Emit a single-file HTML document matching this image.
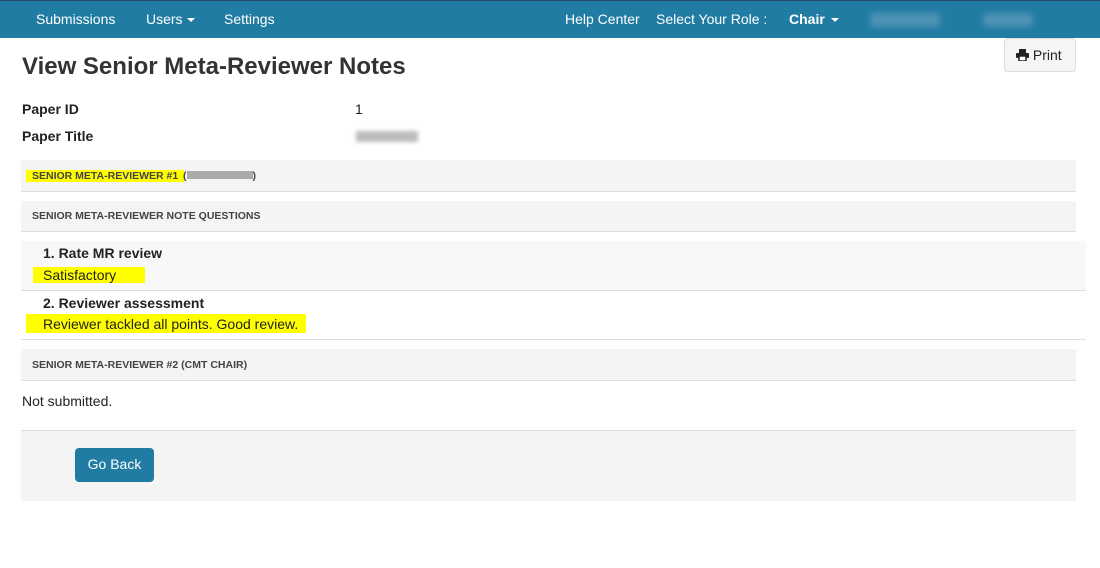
<!DOCTYPE html>
<html><head><style>
body{margin:0;width:1100px;height:568px;background:#fff;font-family:"Liberation Sans",sans-serif;color:#222;position:relative;overflow:hidden}
.a{position:absolute}
.nav{left:0;top:0;width:1100px;height:38px;background:#217ca3;border-top:1px solid #2a4a6a;box-sizing:border-box;color:#fff;font-size:14px}
.nav span{position:absolute;top:10px}
.car{display:inline-block;border-left:4px solid transparent;border-right:4px solid transparent;border-top:4px solid #fff;vertical-align:middle;margin-left:4px}
.blur{background:#4d92b4;border-radius:4px;filter:blur(3px)}
.bar{background:#f4f4f4;border-bottom:1px solid #ddd;font-size:10.5px;font-weight:bold;color:#444}
.hl{background:#ffff00}
</style></head><body>
<div class="a nav">
<span style="left:36px">Submissions</span>
<span style="left:146px">Users<i class="car"></i></span>
<span style="left:224px">Settings</span>
<span style="left:565px">Help Center</span>
<span style="left:656px">Select Your Role :</span>
<span style="left:789px;font-weight:bold">Chair<i class="car" style="margin-left:6px"></i></span>
<div class="a blur" style="left:870px;top:12px;width:70px;height:14px"></div>
<div class="a blur" style="left:983px;top:12px;width:50px;height:14px"></div>
</div>
<div class="a" style="left:1004px;top:38px;width:72px;height:34px;border:1px solid #ddd;border-radius:4px;background:#f5f5f5;font-size:14px;box-sizing:border-box;padding:8px 0 0 11px"><svg width="13" height="12" viewBox="0 0 13 12" style="vertical-align:-1px"><rect x="3" y="0" width="7" height="4" fill="#222"/><rect x="0" y="4" width="13" height="5" rx="1" fill="#222"/><rect x="3" y="7" width="7" height="5" fill="#fff" stroke="#222" stroke-width="1.5"/></svg> Print</div>
<div class="a" style="left:22px;top:53px;font-size:24px;font-weight:bold;color:#333">View Senior Meta-Reviewer Notes</div>
<div class="a" style="left:22px;top:101px;font-size:14px;font-weight:bold">Paper ID</div>
<div class="a" style="left:355px;top:101px;font-size:14px">1</div>
<div class="a" style="left:22px;top:128px;font-size:14px;font-weight:bold">Paper Title</div>
<div class="a" style="left:356px;top:131px;width:62px;height:11px;background:#bbb;filter:blur(2px)"></div>
<div class="a bar" style="left:21px;top:160px;width:1055px;height:31px"><span class="a hl" style="left:5px;top:10px;padding:0 0 0 6px;width:152px">SENIOR META-REVIEWER #1</span><span class="a" style="left:162px;top:10px">(<span style="display:inline-block;width:66px;height:8px;background:#aaa"></span>)</span></div>
<div class="a bar" style="left:21px;top:201px;width:1055px;height:30px"><span class="a" style="left:11px;top:9px">SENIOR META-REVIEWER NOTE QUESTIONS</span></div>
<div class="a" style="left:21px;top:241px;width:1065px;height:49px;background:#f8f8f8;border-bottom:1px solid #ddd"></div>
<div class="a" style="left:43px;top:245px;font-size:14px;font-weight:bold">1. Rate MR review</div>
<div class="a hl" style="left:33px;top:267px;width:112px;height:16px;font-size:14px;padding-left:10px;box-sizing:border-box">Satisfactory</div>
<div class="a" style="left:43px;top:295px;font-size:14px;font-weight:bold">2. Reviewer assessment</div>
<div class="a hl" style="left:26px;top:314px;width:280px;height:19px;font-size:14px;padding:2px 0 0 17px;box-sizing:border-box">Reviewer tackled all points. Good review.</div>
<div class="a" style="left:21px;top:339px;width:1065px;height:1px;background:#ddd"></div>
<div class="a bar" style="left:21px;top:349px;width:1055px;height:31px"><span class="a" style="left:11px;top:10px">SENIOR META-REVIEWER #2 (CMT CHAIR)</span></div>
<div class="a" style="left:22px;top:393px;font-size:14px">Not submitted.</div>
<div class="a" style="left:21px;top:430px;width:1055px;height:70px;background:#f4f4f4;border-top:1px solid #ddd"></div>
<div class="a" style="left:75px;top:448px;width:79px;height:34px;background:#217ca3;border-radius:4px;color:#fff;font-size:14px;text-align:center;line-height:33px">Go Back</div>
</body></html>
